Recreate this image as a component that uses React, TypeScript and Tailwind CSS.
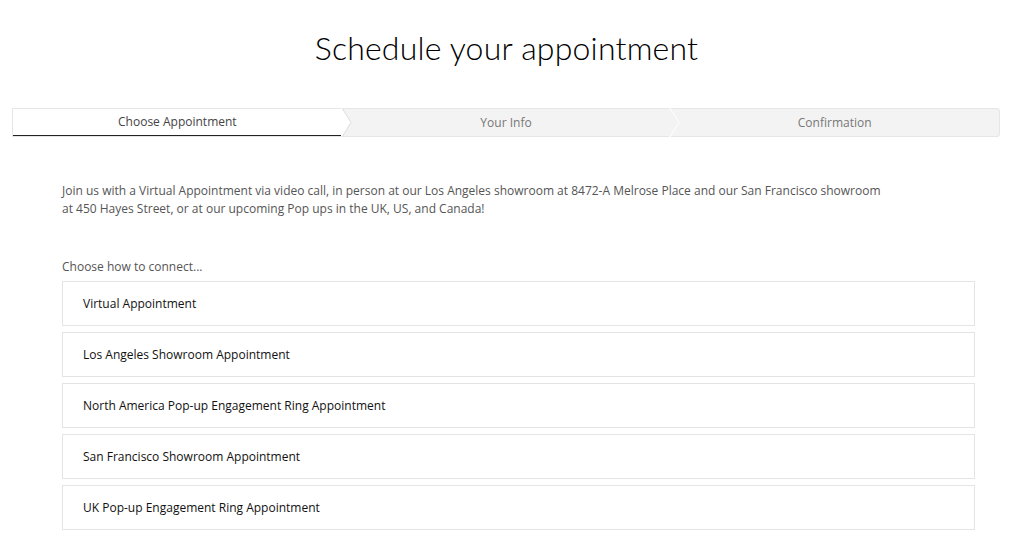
import React from "react";

const options = [
  "Virtual Appointment",
  "Los Angeles Showroom Appointment",
  "North America Pop-up Engagement Ring Appointment",
  "San Francisco Showroom Appointment",
  "UK Pop-up Engagement Ring Appointment",
];

function Chevron({ fill, stroke }: { fill: string; stroke: string }) {
  return (
    <svg
      className="absolute top-[-1px] right-[-10px] z-10"
      width="11"
      height="29"
      viewBox="0 0 11 29"
    >
      <polygon points="0,0 1,0 10,14.5 1,29 0,29" fill={fill} />
      <polyline points="1,0 10,14.5 1,29" fill="none" stroke={stroke} strokeWidth="1" />
    </svg>
  );
}

export default function App() {
  return (
    <div className="w-[1024px] min-h-[558px] bg-white" style={{ fontFamily: '"Open Sans", sans-serif' }}>
      <h1
        className="text-center text-[32px] font-light text-black pt-[28px] pr-[11px] leading-[40px] tracking-[0.2px]"
        style={{ fontFamily: 'Lato, sans-serif' }}
      >
        Schedule your appointment
      </h1>
      <div className="ml-[12px] mr-[24px] mt-[40px] flex h-[29px] border border-[#e6e6e6] rounded-r-[3px] bg-[#f3f3f3] text-[12px]">
        <div className="relative flex-1 bg-white flex items-center justify-center text-[#444] border-b-[1.5px] border-[#222]">
          Choose Appointment
          <Chevron fill="#ffffff" stroke="#dddddd" />
        </div>
        <div className="relative flex-1 flex items-center justify-center text-[#777]">
          Your Info
          <Chevron fill="#f3f3f3" stroke="#ffffff" />
        </div>
        <div className="relative flex-1 flex items-center justify-center text-[#777]">
          Confirmation
        </div>
      </div>
      <div className="ml-[62px] w-[913px] mt-[45px]">
        <p className="text-[12px] leading-[18px] text-[#555]">
          Join us with a Virtual Appointment via video call, in person at our Los Angeles showroom at 8472-A Melrose Place and our San Francisco showroom
          <br />
          at 450 Hayes Street, or at our upcoming Pop ups in the UK, US, and Canada!
        </p>
        <div className="mt-[40px] text-[12px] leading-[18px] text-[#555]">Choose how to connect...</div>
        <div className="mt-[5px] flex flex-col gap-[6px]">
          {options.map((o) => (
            <div
              key={o}
              className="h-[45px] border border-[#e4e4e4] flex items-center pl-[20px] text-[12px] text-[#111]"
            >
              {o}
            </div>
          ))}
        </div>
      </div>
    </div>
  );
}
